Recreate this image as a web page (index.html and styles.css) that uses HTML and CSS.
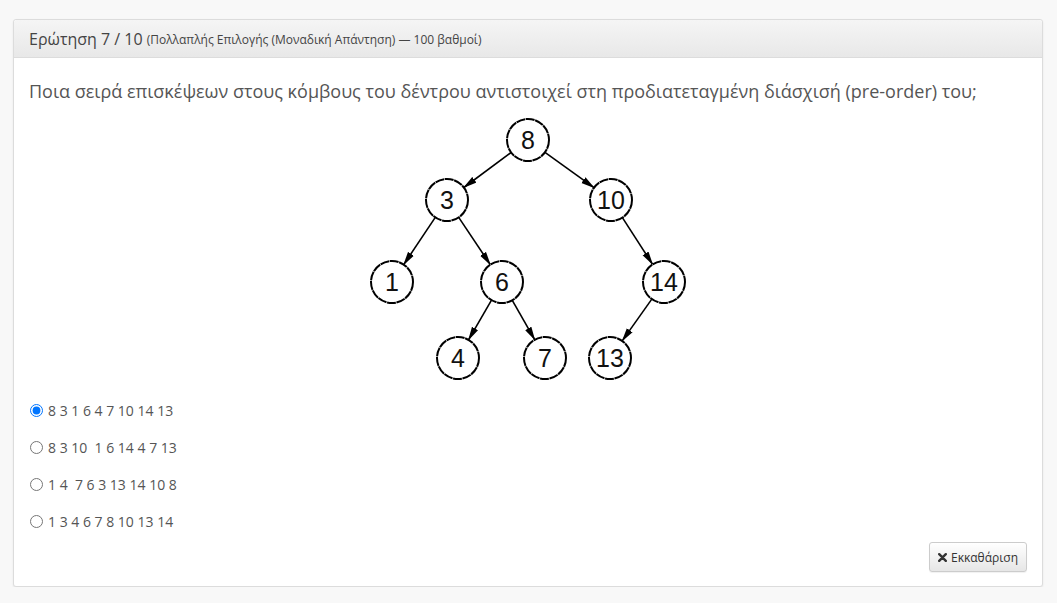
FILE: index.html
```html
<!DOCTYPE html>
<html lang="el">
<head>
<meta charset="utf-8">
<title>Ερώτηση 7 / 10</title>
<link rel="stylesheet" href="styles.css">
</head>
<body>
<div class="panel">
  <div class="panel-heading">
    <span class="q-title">Ερώτηση 7 / 10</span>
    <small class="q-meta">(Πολλαπλής Επιλογής (Μοναδική Απάντηση) — 100 βαθμοί)</small>
  </div>
  <div class="panel-body">
    <p class="question">Ποια σειρά επισκέψεων στους κόμβους του δέντρου αντιστοιχεί στη προδιατεταγμένη διάσχισή (pre-order) του;</p>
    <div class="figure">
      <svg class="tree" width="340" height="275" viewBox="0 0 340 275" xmlns="http://www.w3.org/2000/svg">
        <defs>
          <marker id="arr" markerWidth="14" markerHeight="8" refX="13" refY="4" orient="auto" markerUnits="userSpaceOnUse">
            <path d="M0,0.5 L14,4 L0,7.5 z" fill="#000"/>
          </marker>
        </defs>
        <g stroke="#000" stroke-width="1.6" marker-end="url(#arr)">
          <line x1="153.1" y1="42.5" x2="105.9" y2="77.5"/>
          <line x1="187.0" y1="42.3" x2="236.0" y2="77.7"/>
          <line x1="77.3" y1="107.4" x2="45.7" y2="154.6"/>
          <line x1="100.7" y1="107.4" x2="132.3" y2="154.6"/>
          <line x1="264.4" y1="107.6" x2="294.6" y2="154.4"/>
          <line x1="133.5" y1="190.2" x2="110.5" y2="229.8"/>
          <line x1="154.3" y1="190.3" x2="176.7" y2="229.7"/>
          <line x1="293.8" y1="189.1" x2="264.2" y2="230.9"/>
        </g>
        <g fill="#fff" stroke="#000" stroke-width="2" stroke-dasharray="9 0.6">
          <circle cx="170" cy="30" r="21"/>
          <circle cx="89" cy="90" r="21"/>
          <circle cx="253" cy="90" r="21"/>
          <circle cx="34" cy="172" r="21"/>
          <circle cx="144" cy="172" r="21"/>
          <circle cx="306" cy="172" r="21"/>
          <circle cx="100" cy="248" r="21"/>
          <circle cx="187" cy="248" r="21"/>
          <circle cx="252" cy="248" r="21"/>
        </g>
        <g class="labels" text-anchor="middle">
          <text x="170" y="39">8</text>
          <text x="89" y="99">3</text>
          <text x="253" y="99">10</text>
          <text x="34" y="181">1</text>
          <text x="144" y="181">6</text>
          <text x="306" y="181">14</text>
          <text x="100" y="257">4</text>
          <text x="187" y="257">7</text>
          <text x="252" y="257">13</text>
        </g>
      </svg>
    </div>
    <ul class="options">
      <li><label><input type="radio" name="q7" checked> <span>8 3 1 6 4 7 10 14 13</span></label></li>
      <li><label><input type="radio" name="q7"> <span>8 3 10&nbsp; 1 6 14 4 7 13</span></label></li>
      <li><label><input type="radio" name="q7"> <span>1 4&nbsp; 7 6 3 13 14 10 8</span></label></li>
      <li><label><input type="radio" name="q7"> <span>1 3 4 6 7 8 10 13 14</span></label></li>
    </ul>
    <div class="actions">
      <button class="btn" type="button">
        <svg class="ico" width="9" height="9" viewBox="0 0 9 9"><path d="M1.2 1.2 L7.8 7.8 M7.8 1.2 L1.2 7.8" stroke="#333" stroke-width="2.4" stroke-linecap="round"/></svg>
        Εκκαθάριση
      </button>
    </div>
  </div>
</div>
</body>
</html>
```
FILE: styles.css
```css
html, body {
  margin: 0;
  padding: 0;
}
body {
  background: #f8f8f8;
  font-family: "Open Sans", "Noto Sans", sans-serif;
  color: #555;
}
.panel {
  margin: 19px 14px 0 13px;
  background: #fff;
  border: 1px solid #dcdcdc;
  border-radius: 3px;
  box-shadow: 0 1px 2px rgba(0,0,0,0.08);
  height: 568px;
  box-sizing: border-box;
  display: flex;
  flex-direction: column;
}
.panel-heading {
  flex-shrink: 0;
  height: 38px;
  box-sizing: border-box;
  padding: 0 15px;
  display: flex;
  align-items: center;
  gap: 4px;
  background: linear-gradient(#f5f5f5, #e8e8e8);
  border-bottom: 1px solid #dcdcdc;
  border-radius: 3px 3px 0 0;
}
.q-title {
  font-size: 16px;
  color: #444;
}
.q-meta {
  font-size: 12px;
  color: #444;
  padding-top: 2px;
}
.panel-body {
  flex: 1;
  min-height: 0;
  padding: 20px 15px 14px 15px;
  display: flex;
  flex-direction: column;
}
.question {
  margin: 0;
  font-size: 18px;
  line-height: 26px;
  color: #555;
}
.figure {
  display: flex;
  justify-content: center;
  margin-top: 6px;
}
.tree {
  display: block;
}
.labels text {
  font-family: "Liberation Sans", sans-serif;
  font-size: 25px;
  fill: #111;
}
.options {
  list-style: none;
  margin: 7px 0 0 0;
  padding: 0;
}
.options li {
  height: 37px;
  display: flex;
  align-items: center;
}
.options label {
  display: flex;
  align-items: center;
  gap: 3px;
  font-size: 14px;
  color: #555;
}
.options input {
  margin: 0 2px 0 1px;
  width: 13px;
  height: 13px;
}
.actions {
  margin-top: auto;
  display: flex;
  justify-content: flex-end;
}
.btn {
  font-family: "Open Sans", "Noto Sans", sans-serif;
  font-size: 12px;
  color: #333;
  height: 30px;
  padding: 0 8px;
  border: 1px solid #ccc;
  border-radius: 3px;
  background: linear-gradient(#fff, #e6e6e6);
  box-shadow: 0 1px 1px rgba(0,0,0,0.06);
  display: flex;
  align-items: center;
  gap: 4px;
}
.ico {
  display: block;
}
```
